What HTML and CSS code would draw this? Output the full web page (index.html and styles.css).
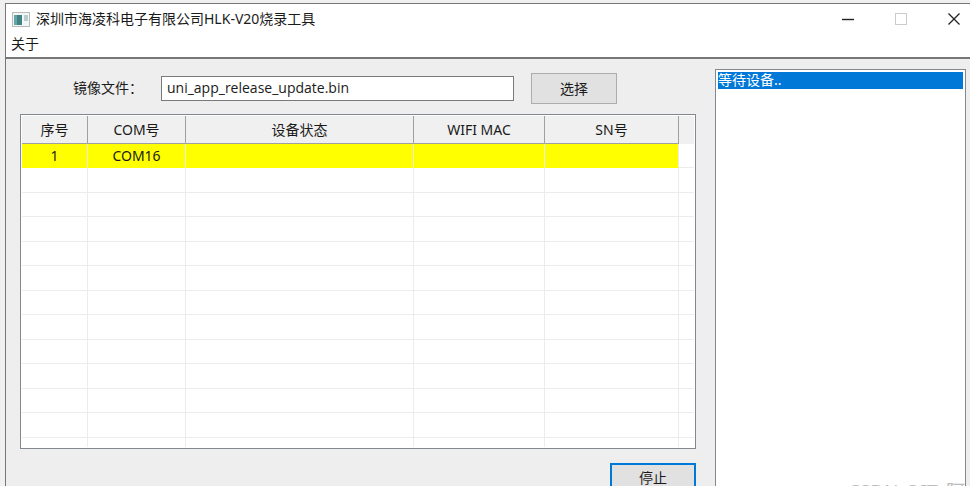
FILE: index.html
```html
<!DOCTYPE html>
<html lang="zh-CN">
<head>
    <meta charset="UTF-8">
    <meta name="viewport" content="width=device-width, initial-scale=1.0">
    <title>深圳市海凌科电子有限公司HLK-V20烧录工具</title>
    <link rel="stylesheet" href="styles.css">
</head>
<body>
    <div class="window">
        <header class="titlebar">
            <svg class="app-icon" width="18" height="15" viewBox="0 0 18 15">
                <rect x="0.5" y="0.5" width="17" height="14" fill="#f4f6f6" stroke="#b4bcbc"/>
                <rect x="2" y="3" width="8" height="10" fill="#3f8583"/>
                <rect x="2" y="3" width="3" height="10" fill="#68a3a6"/>
                <rect x="12" y="3" width="4" height="6" fill="#b9cdd0"/>
            </svg>
            <h1>深圳市海凌科电子有限公司HLK-V20烧录工具</h1>
            <div class="window-buttons">
                <button type="button" aria-label="最小化">
                    <svg width="14" height="14" viewBox="0 0 14 14"><path d="M1 7.5H13" stroke="#222" stroke-width="1.4"/></svg>
                </button>
                <button type="button" aria-label="最大化" disabled>
                    <svg width="14" height="14" viewBox="0 0 14 14"><rect x="1.5" y="1.5" width="11" height="11" fill="none" stroke="#ccc"/></svg>
                </button>
                <button type="button" aria-label="关闭">
                    <svg width="14" height="14" viewBox="0 0 14 14"><path d="M1.5 1.5L12.5 12.5M12.5 1.5L1.5 12.5" stroke="#222" stroke-width="1.3"/></svg>
                </button>
            </div>
        </header>
        <nav class="menubar">
            <a href="#about">关于</a>
        </nav>
        <main class="content">
            <section class="burn">
                <div class="file-row">
                    <label for="image-file">镜像文件：</label>
                    <input type="text" id="image-file" value="uni_app_release_update.bin">
                    <button type="button" class="btn">选择</button>
                </div>
                <div class="device-box">
                    <table class="devices">
                        <colgroup>
                            <col class="col-index">
                            <col class="col-com">
                            <col class="col-status">
                            <col class="col-mac">
                            <col class="col-sn">
                            <col class="col-rest">
                        </colgroup>
                        <thead>
                            <tr><th>序号</th><th>COM号</th><th>设备状态</th><th>WIFI MAC</th><th>SN号</th><td></td></tr>
                        </thead>
                        <tbody>
                            <tr class="active"><td>1</td><td>COM16</td><td></td><td></td><td></td><td></td></tr>
                            <tr><td></td><td></td><td></td><td></td><td></td><td></td></tr>
                            <tr><td></td><td></td><td></td><td></td><td></td><td></td></tr>
                            <tr><td></td><td></td><td></td><td></td><td></td><td></td></tr>
                            <tr><td></td><td></td><td></td><td></td><td></td><td></td></tr>
                            <tr><td></td><td></td><td></td><td></td><td></td><td></td></tr>
                            <tr><td></td><td></td><td></td><td></td><td></td><td></td></tr>
                            <tr><td></td><td></td><td></td><td></td><td></td><td></td></tr>
                            <tr><td></td><td></td><td></td><td></td><td></td><td></td></tr>
                            <tr><td></td><td></td><td></td><td></td><td></td><td></td></tr>
                            <tr><td></td><td></td><td></td><td></td><td></td><td></td></tr>
                            <tr><td></td><td></td><td></td><td></td><td></td><td></td></tr>
                            <tr class="last"><td></td><td></td><td></td><td></td><td></td><td></td></tr>
                        </tbody>
                    </table>
                </div>
                <div class="actions">
                    <button type="button" class="btn btn-default">停止</button>
                </div>
            </section>
            <ul class="log">
                <li class="selected">等待设备..</li>
            </ul>
        </main>
    </div>
    <div class="watermark">CSDN @IT_阿</div>
</body>
</html>
```
FILE: styles.css
```css
* {
    box-sizing: border-box;
}
body {
    margin: 0;
    height: 100vh;
    padding: 3px 0 0 5px;
    overflow: hidden;
    position: relative;
    background-color: #f0f0f0;
    color: #1a1a1a;
    font-family: "Noto Sans", "Noto Sans CJK SC", sans-serif;
    font-size: 14px;
    line-height: 20px;
}
button, input {
    font: inherit;
    color: inherit;
}
.window {
    display: flex;
    flex-direction: column;
    height: 100%;
    border-top: 1px solid #777;
    border-left: 1px solid #777;
    background-color: #eee;
}
/* Title bar and menu */
.titlebar {
    display: flex;
    align-items: center;
    height: 30px;
    padding-left: 6px;
    background-color: #fff;
}
.titlebar h1 {
    flex: 1;
    margin: 0 0 0 6px;
    font-size: 14px;
    font-weight: normal;
}
.window-buttons {
    display: flex;
    gap: 25px;
    padding-right: 2px;
}
.window-buttons button {
    display: flex;
    justify-content: center;
    width: 28px;
    padding: 0;
    border: none;
    background: none;
}
.menubar {
    height: 25px;
    padding-left: 5px;
    background-color: #fff;
    border-bottom: 2px solid #777;
}
.menubar a {
    color: inherit;
    text-decoration: none;
}
/* Main area */
.content {
    flex: 1;
    display: flex;
    min-height: 0;
    gap: 19px;
    padding: 10px 4px 0 14px;
}
.burn {
    flex: 1;
    min-width: 0;
}
.file-row {
    display: flex;
    align-items: center;
    padding: 4px 79px 0 53px;
}
.file-row label {
    width: 88px;
    padding-bottom: 2px;
}
.file-row input {
    flex: 1;
    min-width: 0;
    height: 25px;
    margin-right: 17px;
    padding: 0 5px 2px;
    border: 1px solid #7a7a7a;
    background-color: #fff;
    font-family: "Open Sans", sans-serif;
}
.btn {
    width: 86px;
    height: 31px;
    padding: 0;
    border: 1px solid #adadad;
    background-color: #e1e1e1;
}
.btn-default {
    padding-bottom: 2px;
    border: 2px solid #0078d7;
}
.device-box {
    margin-top: 10px;
    padding: 1px;
    border: 1px solid #828790;
    background-color: #fff;
}
.devices {
    width: 100%;
    table-layout: fixed;
    border-collapse: separate;
    border-spacing: 0;
    text-align: center;
}
.col-index { width: 66px; }
.col-com { width: 98px; }
.col-mac { width: 131px; }
.col-sn { width: 134px; }
.col-rest { width: 15px; }
.devices th, .devices td {
    padding: 0;
    line-height: 20px;
}
.devices thead tr {
    height: 28px;
    background-color: #f0f0f0;
}
.devices th {
    border-right: 1px solid #a0a0a0;
    border-bottom: 1px solid #a0a0a0;
    font-weight: normal;
}
.devices tbody tr {
    height: 24px;
}
.devices tbody tr:nth-child(even) {
    height: 25px;
}
.devices tbody td {
    border-right: 1px solid #ececec;
    border-bottom: 1px solid #ececec;
}
.devices tbody td:last-child {
    border-right: none;
}
.devices .active td:not(:last-child) {
    background-color: #ff0;
    border-bottom-color: #ff0;
}
.devices tbody .last {
    height: 9px;
}
.devices tbody .last td {
    border-bottom: none;
}
.actions {
    display: flex;
    justify-content: flex-end;
    padding: 14px 0 0;
}
/* Log list */
.log {
    width: 251px;
    margin: 0;
    padding: 2px;
    list-style: none;
    border: 1px solid #828790;
    border-bottom: none;
    background-color: #fff;
}
.log li {
    height: 17px;
    line-height: 16px;
}
.log .selected {
    background-color: #0078d7;
    color: #fff;
}
.watermark {
    position: absolute;
    right: 5px;
    bottom: -16px;
    color: #bbb;
    font-size: 19px;
}
```
